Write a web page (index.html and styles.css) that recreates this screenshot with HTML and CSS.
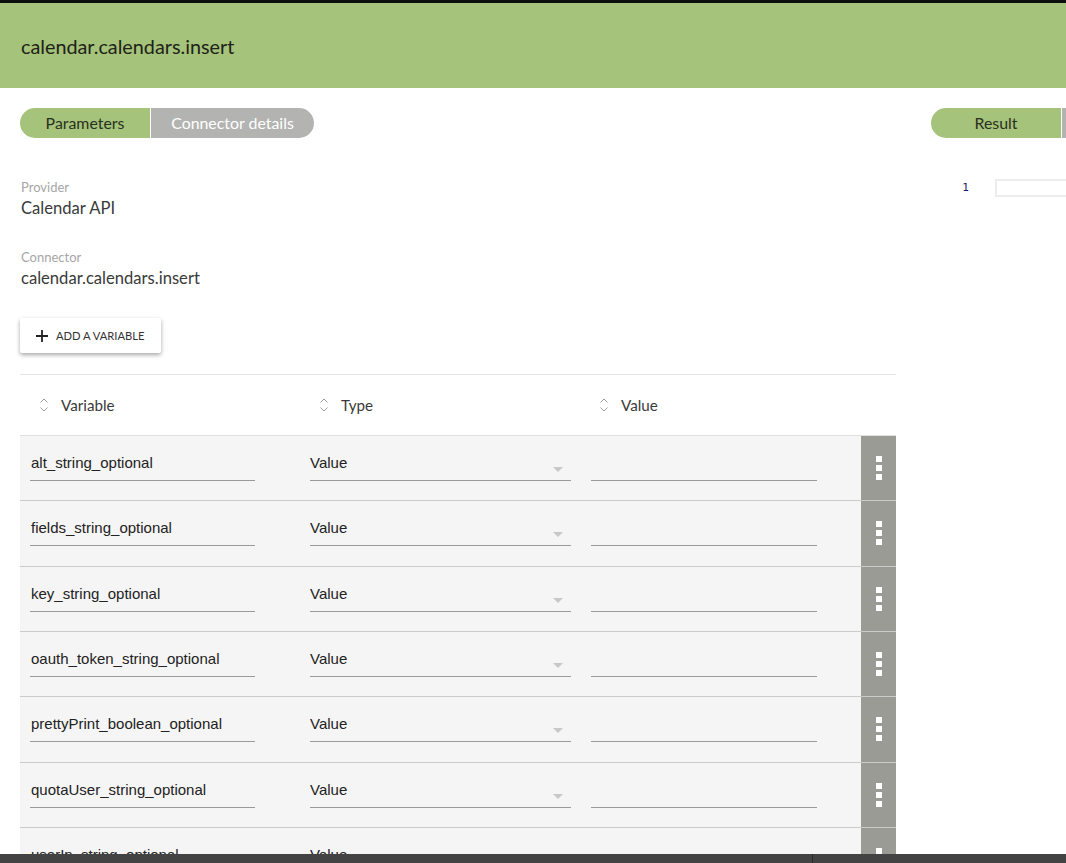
FILE: index.html
```html
<!DOCTYPE html>
<html>
<head>
<meta charset="utf-8">
<link rel="stylesheet" href="styles.css">
</head>
<body>
<div class="topstrip"></div>
<header class="header"><h1 class="title">calendar.calendars.insert</h1></header>
<main class="main">
  <section class="left">
    <div class="tabs">
      <div class="tab tab-active">Parameters</div>
      <div class="tab tab-inactive">Connector details</div>
    </div>
    <div class="field first">
      <div class="label">Provider</div>
      <div class="value">Calendar API</div>
    </div>
    <div class="field">
      <div class="label">Connector</div>
      <div class="value">calendar.calendars.insert</div>
    </div>
    <button class="addbtn">
      <svg width="14" height="14" viewBox="0 0 14 14"><path d="M7 1v12M1 7h12" stroke="#222" stroke-width="1.8" fill="none"/></svg>
      <span>Add a variable</span>
    </button>
    <div class="table">
      <div class="thead">
        <div class="th"><svg class="sort" width="10" height="16" viewBox="0 0 10 16"><path d="M1.5 5.5L5 2l3.5 3.5M1.5 10.5L5 14l3.5-3.5" stroke="#9a9a9a" stroke-width="1" fill="none"/></svg>Variable</div>
        <div class="th"><svg class="sort" width="10" height="16" viewBox="0 0 10 16"><path d="M1.5 5.5L5 2l3.5 3.5M1.5 10.5L5 14l3.5-3.5" stroke="#9a9a9a" stroke-width="1" fill="none"/></svg>Type</div>
        <div class="th"><svg class="sort" width="10" height="16" viewBox="0 0 10 16"><path d="M1.5 5.5L5 2l3.5 3.5M1.5 10.5L5 14l3.5-3.5" stroke="#9a9a9a" stroke-width="1" fill="none"/></svg>Value</div>
        <div class="th"></div>
      </div>
      <div class="row">
        <div class="cell"><div class="inp var">alt_string_optional</div></div>
        <div class="cell"><div class="inp sel">Value<span class="caret"></span></div></div>
        <div class="cell"><div class="inp val"></div></div>
        <div class="kebab"><i></i><i></i><i></i></div>
      </div>
      <div class="row">
        <div class="cell"><div class="inp var">fields_string_optional</div></div>
        <div class="cell"><div class="inp sel">Value<span class="caret"></span></div></div>
        <div class="cell"><div class="inp val"></div></div>
        <div class="kebab"><i></i><i></i><i></i></div>
      </div>
      <div class="row">
        <div class="cell"><div class="inp var">key_string_optional</div></div>
        <div class="cell"><div class="inp sel">Value<span class="caret"></span></div></div>
        <div class="cell"><div class="inp val"></div></div>
        <div class="kebab"><i></i><i></i><i></i></div>
      </div>
      <div class="row">
        <div class="cell"><div class="inp var">oauth_token_string_optional</div></div>
        <div class="cell"><div class="inp sel">Value<span class="caret"></span></div></div>
        <div class="cell"><div class="inp val"></div></div>
        <div class="kebab"><i></i><i></i><i></i></div>
      </div>
      <div class="row">
        <div class="cell"><div class="inp var">prettyPrint_boolean_optional</div></div>
        <div class="cell"><div class="inp sel">Value<span class="caret"></span></div></div>
        <div class="cell"><div class="inp val"></div></div>
        <div class="kebab"><i></i><i></i><i></i></div>
      </div>
      <div class="row">
        <div class="cell"><div class="inp var">quotaUser_string_optional</div></div>
        <div class="cell"><div class="inp sel">Value<span class="caret"></span></div></div>
        <div class="cell"><div class="inp val"></div></div>
        <div class="kebab"><i></i><i></i><i></i></div>
      </div>
      <div class="row">
        <div class="cell"><div class="inp var">userIp_string_optional</div></div>
        <div class="cell"><div class="inp sel">Value<span class="caret"></span></div></div>
        <div class="cell"><div class="inp val"></div></div>
        <div class="kebab"><i></i><i></i><i></i></div>
      </div>
    </div>
  </section>
  <section class="right">
    <div class="tabs">
      <div class="tab tab-active">Result</div>
      <div class="tab tab-inactive"></div>
    </div>
    <div class="editor">
      <div class="gutter">1</div>
      <div class="codebox"></div>
    </div>
  </section>
</main>
<div class="bottombar"><div class="bb-left"></div><div class="bb-right"></div></div>
</body>
</html>
```
FILE: styles.css
```css
html, body {
  margin: 0;
  padding: 0;
  height: 863px;
  overflow: hidden;
  background: #fff;
  font-family: Lato, "Open Sans", sans-serif;
  color: #333;
}
.topstrip {
  height: 3px;
  background: #0c0f0b;
}
.header {
  height: 85px;
  background: #a5c37a;
  display: flex;
  align-items: center;
  padding-left: 21px;
}
.title {
  margin: 0;
  font-size: 19.8px;
  font-weight: 400;
  color: #1e2218;
}
.main {
  display: flex;
  gap: 35px;
  padding: 20px 0 0 20px;
}
.left {
  width: 876px;
  flex: none;
}
.right {
  width: 400px;
  flex: none;
}
.tabs {
  display: flex;
  gap: 1px;
  height: 30px;
}
.tab {
  height: 30px;
  line-height: 30px;
  font-size: 15.9px;
  text-align: center;
}
.tab-active {
  width: 130px;
  background: #a5c37a;
  color: #2a3020;
  border-radius: 15px 0 0 15px;
}
.tab-inactive {
  width: 163px;
  background: #b3b3b1;
  color: #fff;
  border-radius: 0 15px 15px 0;
}
.field {
  margin-top: 31px;
  padding-left: 1px;
}
.field.first {
  margin-top: 41px;
}
.label {
  font-size: 13px;
  line-height: 16px;
  color: #a6a6a6;
  margin-bottom: 3px;
}
.value {
  font-size: 16.6px;
  line-height: 20px;
  color: #3a3a3a;
}
.addbtn {
  margin-top: 30px;
  width: 141px;
  height: 35px;
  border: none;
  background: #fff;
  box-shadow: 0 2px 4px rgba(0,0,0,0.35);
  border-radius: 2px;
  display: flex;
  align-items: center;
  gap: 7px;
  padding: 0 0 0 15px;
  font-family: Lato, "Open Sans", sans-serif;
  font-size: 11.2px;
  text-transform: uppercase;
  color: #333;
}
.table {
  margin-top: 21px;
  border-top: 1px solid #e4e4e4;
}
.thead, .row {
  display: grid;
  grid-template-columns: 280px 280px 281px 35px;
}
.thead {
  height: 60px;
  border-bottom: 1px solid #e0e0e0;
}
.th {
  display: flex;
  align-items: center;
  padding-left: 19px;
  font-size: 15.2px;
  color: #3a3a3a;
}
.sort {
  margin-right: 12px;
}
.row {
  height: 64.33px;
  border-bottom: 1px solid #cbcbcb;
  background: #f5f5f5;
}
.cell {
  padding: 16px 0 0 10px;
}
.inp {
  position: relative;
  height: 28px;
  line-height: 22px;
  border-bottom: 1px solid #9a9a9a;
  font-family: "Liberation Sans", Arial, sans-serif;
  font-size: 15px;
  color: #222;
  padding-left: 1px;
}
.var { width: 224px; }
.sel { width: 261px; padding-left: 0; }
.val { width: 225px; margin-left: 1px; }
.caret {
  position: absolute;
  right: 8px;
  top: 15px;
  width: 0;
  height: 0;
  border-left: 5px solid transparent;
  border-right: 5px solid transparent;
  border-top: 5px solid #c8c8c8;
}
.kebab {
  background: #9b9b95;
  display: flex;
  flex-direction: column;
  align-items: center;
  justify-content: center;
  gap: 3px;
}
.kebab i {
  display: block;
  width: 6px;
  height: 6px;
  background: #fff;
}
.editor {
  display: flex;
  align-items: flex-start;
  margin-top: 41px;
}
.gutter {
  width: 64px;
  padding-left: 5px;
  box-sizing: border-box;
  text-align: center;
  font-family: "DejaVu Sans Mono", monospace;
  font-size: 11px;
  line-height: 17px;
  color: #1a1a6a;
}
.codebox {
  width: 300px;
  height: 14px;
  border: 2px solid #ececec;
  border-right: none;
}
.bottombar {
  position: fixed;
  left: 0;
  right: 0;
  bottom: 0;
  height: 9px;
  display: flex;
  background: #434343;
}
.bb-left {
  width: 812px;
  border-right: 1px solid #2c2c2c;
}
.bb-right {
  flex: 1;
}
```
